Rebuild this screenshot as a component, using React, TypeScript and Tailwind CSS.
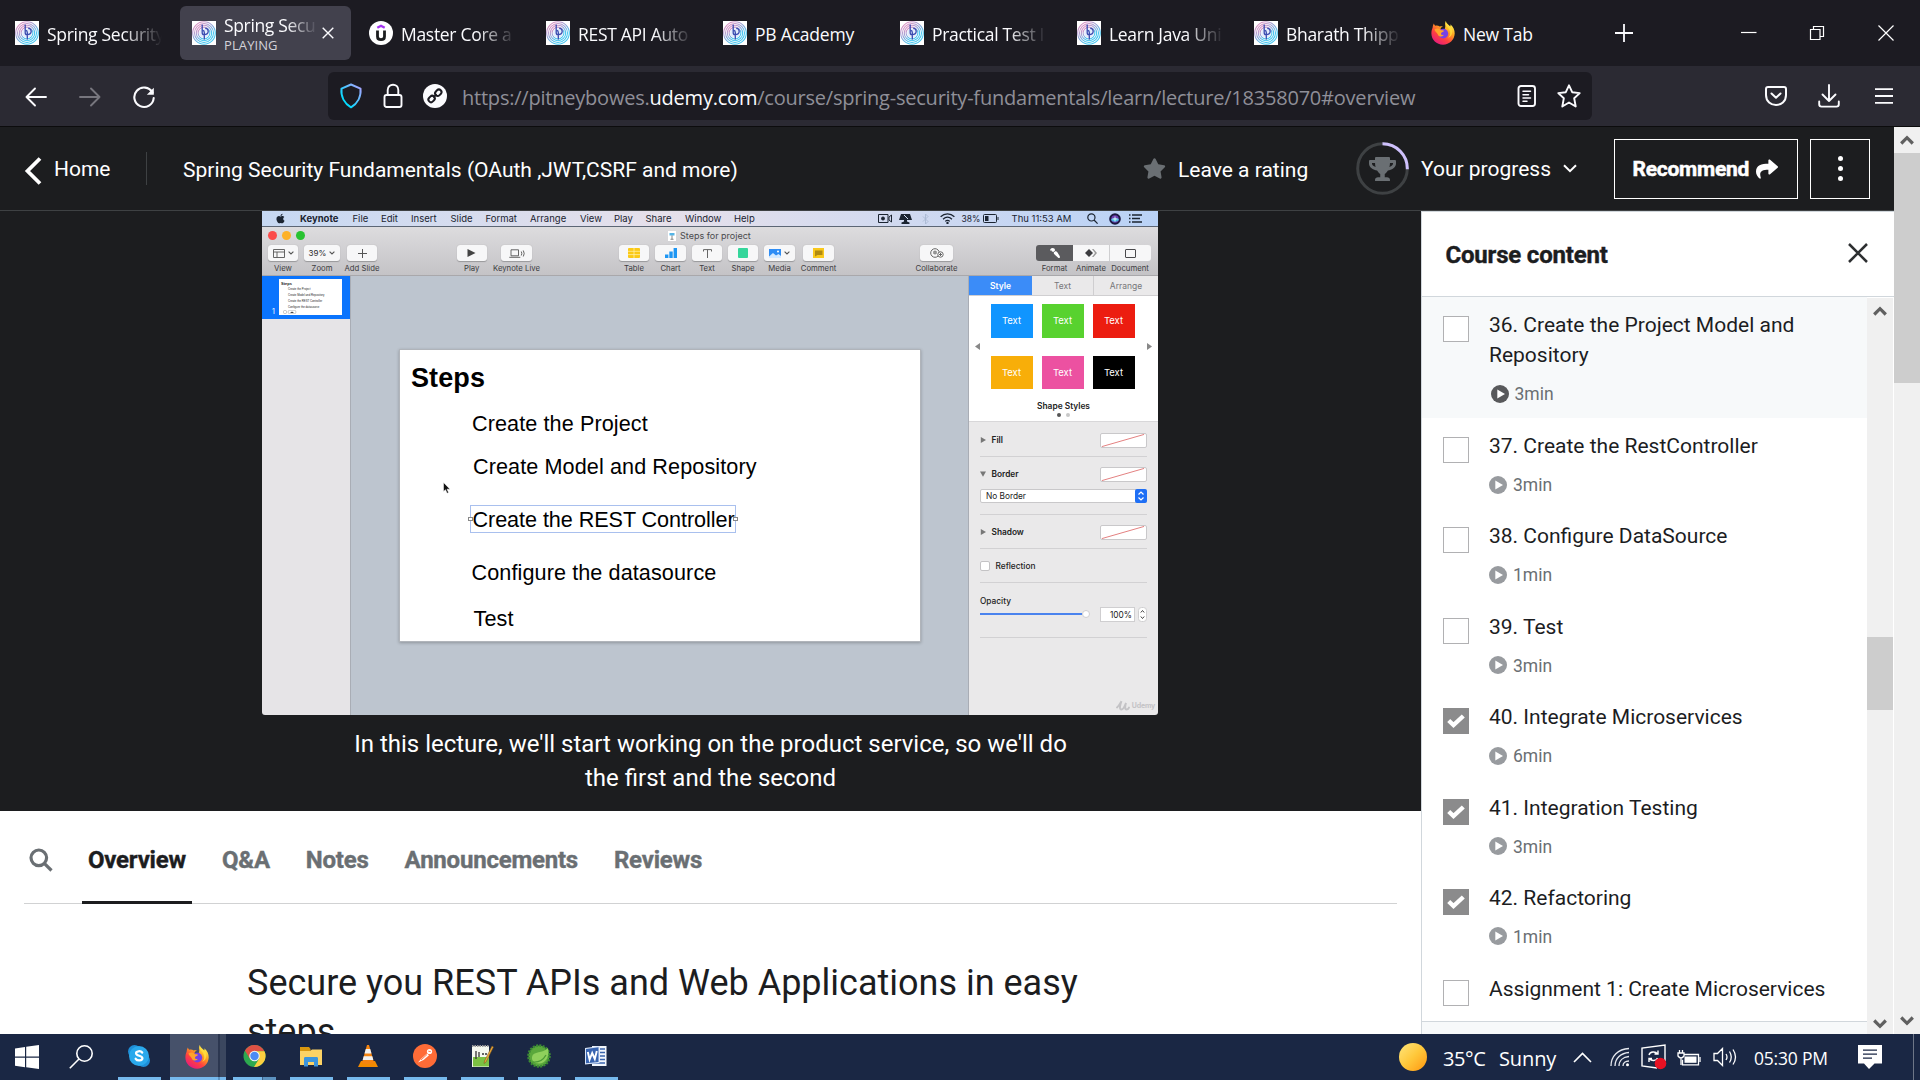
import React from 'react';
import { FaCheck, FaStar, FaTrophy, FaShare, FaApple, FaPaintBrush } from 'react-icons/fa';

/* ---------- shared drawings ---------- */

function FingerprintIcon() {
  return (
    <svg viewBox="0 0 24 24" className="h-6 w-6 shrink-0">
      <defs>
        <linearGradient id="fp" x1="0" y1="0" x2="0.7" y2="1">
          <stop offset="0.1" stopColor="#e58fc0" />
          <stop offset="0.5" stopColor="#8fa3d8" />
          <stop offset="0.8" stopColor="#45c5ef" />
        </linearGradient>
      </defs>
      <rect width="24" height="24" fill="#fff" />
      {[11.3, 9.5, 7.7, 5.9].map((r) => (
        <circle key={r} cx="12" cy="12" r={r} fill="none" stroke="url(#fp)" strokeWidth="1.05" />
      ))}
      <circle cx="12" cy="12" r="4.8" fill="#e4ecfb" />
      <path d="M10.200 3.500v8.200c0 1.200.8 1.900 1.800 1.900 2.600 0 4.200-1.400 4.200-3.300 0-1.700-1.400-2.900-3-2.900M12.300 18.500v-7c0-1.400-.6-2-1.400-2" fill="none" stroke="#3a4bb0" strokeWidth="1.300" />
    </svg>
  );
}

function UdemyIcon() {
  return (
    <svg viewBox="0 0 24 24" className="h-6 w-6 shrink-0">
      <circle cx="12" cy="12" r="12" fill="#fff" />
      <path d="M8.300 6.800 12 4.700l3.700 2.100" fill="none" stroke="#a435f0" strokeWidth="2.300" />
      <path d="M8.500 9.600v5.800c0 4.300 7 4.300 7 0V9.600" fill="none" stroke="#1c1d1f" strokeWidth="2.800" />
    </svg>
  );
}

function FirefoxIcon() {
  return (
    <svg viewBox="0 0 24 24" className="h-6 w-6 shrink-0">
      <defs>
        <linearGradient id="ffx" x1="0.85" y1="0.05" x2="0.2" y2="1">
          <stop offset="0.05" stopColor="#fff44f" />
          <stop offset="0.35" stopColor="#ffa21f" />
          <stop offset="0.65" stopColor="#ff4040" />
          <stop offset="1" stopColor="#e31587" />
        </linearGradient>
      </defs>
      <path d="M14.8 0c.5 2.700 3 3.800 4.300 5.400.6-.3.5-1.500.2-2.100 3 2.300 4.500 5.900 4.400 9.300C23.500 19 18.400 23.800 12 23.800S.4 19 .4 12.600c0-2.400.5-4.400 1.200-5.800.1-1.500.5-3.300 1.300-4.300.2 1 .7 1.800 1.300 2.300 1.400-.4 3.300-.2 4.500.6 1.500-.3 2.600-.1 3.200.2-1.600.7-2.300 1.700-2.400 2.600C12 9.200 14 9 14 7c1-2.300-.7-4.300.8-7z" fill="url(#ffx)" />
      <circle cx="12.300" cy="12.600" r="4.900" fill="#7542e5" />
      <path d="M3.500 8.500c2-1.500 5-1 6 .6 1.300.4 3 .2 3.600.9-.7 1-2.300 1.200-3 2-.6 1.900 1.400 2.700 3 1.600-1.400 3-5.600 2.400-6.500-.7C5.300 11 4 10.500 3.500 8.500z" fill="#ffa42a" />
      <path d="M14.500 2c.2 3.600 4.600 5 4.700 10 0 2-.8 3.700-2.200 4.800 5-1.500 5.500-8 2.300-11.400C17.500 4 15.500 3.500 14.500 2z" fill="#ffe03d" opacity="0.8" />
    </svg>
  );
}

/* ---------- browser chrome ---------- */

const TABS = [
  { icon: 'fp', title: 'Spring Security' },
  { icon: 'fp', title: 'Spring Secu', active: true },
  { icon: 'ud', title: 'Master Core a' },
  { icon: 'fp', title: 'REST API Auto' },
  { icon: 'fp', title: 'PB Academy', full: true },
  { icon: 'fp', title: 'Practical Test I' },
  { icon: 'fp', title: 'Learn Java Uni' },
  { icon: 'fp', title: 'Bharath Thipp' },
  { icon: 'ff', title: 'New Tab', full: true },
];

const FADE = '[mask-image:linear-gradient(to_right,black_66%,transparent_100%)]';

function Tab({ tab }: { tab: (typeof TABS)[number] }) {
  const icon = tab.icon === 'fp' ? <FingerprintIcon /> : tab.icon === 'ud' ? <UdemyIcon /> : <FirefoxIcon />;
  if (tab.active) {
    return (
      <div className="mr-1.5 flex h-[54px] w-[171px] shrink-0 items-center rounded-md bg-[#42414d] pl-3">
        {icon}
        <div className="ml-2 w-[94px]">
          <div className={`whitespace-nowrap text-[17.5px] leading-6 tracking-[-0.35px] ${FADE}`}>{tab.title}</div>
          <div className="text-[13px] leading-4 text-[#d3d2d8] tracking-[0.1px]">PLAYING</div>
        </div>
        <svg viewBox="0 0 12 12" className="ml-1 h-3 w-3" stroke="#fbfbfe" strokeWidth="1.4">
          <path d="M.7.7l10.600 10.600M11.300.7.7 11.300" />
        </svg>
      </div>
    );
  }
  return (
    <div className="flex h-[54px] w-[177px] shrink-0 items-center pl-3">
      {icon}
      <div className={`ml-2 w-[115px] whitespace-nowrap pt-px text-[17.5px] leading-6 ${tab.full ? 'tracking-[-0.2px]' : `tracking-[-0.3px] ${FADE}`}`}>{tab.title}</div>
    </div>
  );
}

function TabBar() {
  return (
    <div className="flex h-[66px] shrink-0 items-center bg-[#1c1b22] pl-[3px] text-[#fbfbfe]">
      {TABS.map((t, i) => <Tab key={i} tab={t} />)}
      <svg viewBox="0 0 18 18" className="ml-[19px] h-[18px] w-[18px] shrink-0" stroke="#fbfbfe" strokeWidth="1.800">
        <path d="M9 0v18M0 9h18" />
      </svg>
      <svg viewBox="0 0 16 16" className="ml-[108px] h-4 w-4 shrink-0" stroke="#fff" strokeWidth="1.200"><path d="M0 7.500h15.500" /></svg>
      <svg viewBox="0 0 16 16" className="ml-[52px] h-4 w-4 shrink-0" stroke="#fff" strokeWidth="1.200" fill="none">
        <path d="M1.500 4.500h9.500v10H1.500zM4.500 4.300V1.500h10v10h-3.300" />
      </svg>
      <svg viewBox="0 0 16 16" className="ml-[53px] h-4 w-4 shrink-0" stroke="#fff" strokeWidth="1.200"><path d="M.5.5l15 15M15.500.5l-15 15" /></svg>
    </div>
  );
}

function NavBar() {
  return (
    <div className="flex h-[61px] shrink-0 items-center border-b border-[#0c0c0d] bg-[#2b2a33] text-[#fbfbfe]">
      <svg viewBox="0 0 22 22" className="ml-[25px] mt-0.5 h-[22px] w-[22px] shrink-0" stroke="#fbfbfe" strokeWidth="1.900" fill="none" strokeLinecap="round" strokeLinejoin="round">
        <path d="M21 11H1.500M10 2.500 1.500 11l8.500 8.500" />
      </svg>
      <svg viewBox="0 0 22 22" className="ml-8 mt-0.5 h-[22px] w-[22px] shrink-0" stroke="#77767e" strokeWidth="1.900" fill="none" strokeLinecap="round" strokeLinejoin="round">
        <path d="M1 11h19.500M12 2.500l8.500 8.500-8.500 8.500" />
      </svg>
      <svg viewBox="0 0 24 24" className="ml-[31px] mt-0.5 h-6 w-6 shrink-0" stroke="#fbfbfe" strokeWidth="2.100" fill="none" strokeLinecap="round">
        <path d="M20.500 7.500A9.700 9.700 0 1 0 21.700 13" />
        <path d="M21.800 2.800v7h-7z" fill="#fbfbfe" stroke="none" />
      </svg>

      <div className="ml-[172px] flex h-12 w-[1264px] shrink-0 items-center rounded-md bg-[#1c1b22]">
        <svg viewBox="0 0 24 26" className="ml-[11px] h-[26px] w-6 shrink-0" fill="none" strokeWidth="2">
          <defs>
            <linearGradient id="sh" x1="0" y1="1" x2="1" y2="0"><stop offset="0.2" stopColor="#00ddff" /><stop offset="1" stopColor="#b5a0ff" /></linearGradient>
          </defs>
          <path d="M12 1.500 21.500 5.600c.8 8-3 15-9.500 18.700C5.500 20.600 1.700 13.600 2.500 5.600z" stroke="url(#sh)" strokeLinejoin="round" />
        </svg>
        <svg viewBox="0 0 20 26" className="ml-5 h-[26px] w-5 shrink-0" fill="none" stroke="#fbfbfe" strokeWidth="1.900">
          <rect x="1.500" y="12" width="17" height="12" rx="2" />
          <path d="M4.700 12V7c0-7 10.600-7 10.600 0v5" />
        </svg>
        <svg viewBox="0 0 24 24" className="ml-5 h-6 w-6 shrink-0" fill="none">
          <circle cx="12" cy="12" r="12" fill="#fbfbfe" />
          <g stroke="#1c1b22" strokeWidth="2">
            <rect x="-3.400" y="-2.600" width="6.800" height="5.200" rx="2.600" transform="translate(8.600 15) rotate(-45)" />
            <rect x="-3.400" y="-2.600" width="6.800" height="5.200" rx="2.600" transform="translate(15.300 8.700) rotate(-45)" />
            <path d="M10.300 13.500l3.300-3.300" />
          </g>
        </svg>
        <div className="ml-[15px] w-[1040px] whitespace-nowrap pt-[3px] text-[20px] leading-7 tracking-[-0.22px] text-[#8f8f98]">
          https://pitneybowes.<span className="text-[#fbfbfe]">udemy.com</span>/course/spring-security-fundamentals/learn/lecture/18358070#overview
        </div>
        <svg viewBox="0 0 20 22" className="ml-[15px] h-[22px] w-5 shrink-0" fill="none" stroke="#fbfbfe" strokeWidth="1.900" strokeLinecap="round">
          <rect x="1.500" y="1" width="16.500" height="20" rx="2.500" />
          <path d="M6 6.300h7.500M6 9.700h5.500M6 13h7.500M6 16.300h4" strokeWidth="1.500" />
        </svg>
        <svg viewBox="0 0 24 24" className="ml-5 h-6 w-6 shrink-0" fill="none" stroke="#fbfbfe" strokeWidth="1.900" strokeLinejoin="round">
          <path d="M12 1.300l3.200 6.900 7.500.9-5.500 5.200 1.500 8.200-6.700-4-6.700 4 1.500-8.200L1.300 9.100l7.500-.9z" />
        </svg>
      </div>

      <svg viewBox="0 0 22 20" className="ml-[173px] h-5 w-[22px] shrink-0" fill="none" stroke="#fbfbfe" strokeWidth="2" strokeLinecap="round" strokeLinejoin="round">
        <path d="M3 1h16c1.300 0 2 .7 2 2v6c0 13.300-20 13.300-20 0V3c0-1.300.7-2 2-2z" />
        <path d="M6.500 7.500l4.500 4.300 4.500-4.300" />
      </svg>
      <svg viewBox="0 0 22 24" className="ml-[31px] h-6 w-[22px] shrink-0" fill="none" stroke="#fbfbfe" strokeWidth="1.900" strokeLinecap="round" strokeLinejoin="round">
        <path d="M11 1v16M4.500 10.500 11 17l6.500-6.500M1.200 17.500v2.800c0 1.500.8 2.300 2.300 2.300h15c1.500 0 2.300-.8 2.300-2.300v-2.800" />
      </svg>
      <svg viewBox="0 0 18 16" className="ml-[35px] h-4 w-[18px] shrink-0" stroke="#fbfbfe" strokeWidth="1.800"><path d="M0 1.200h18M0 8h18M0 14.800h18" /></svg>
    </div>
  );
}

/* ---------- course header ---------- */

function CourseHeader() {
  return (
    <div className="flex h-[84px] shrink-0 items-center whitespace-nowrap border-b border-[#3e4143] bg-[#1c1d1f] text-[21px] leading-7 text-white">
      <svg viewBox="0 0 18 28" className="ml-6 mt-1 h-7 w-[18px] shrink-0" fill="none" stroke="#fff" strokeWidth="3.800"><path d="M16 1.500 3.500 14 16 26.500" /></svg>
      <div className="ml-3 w-[58px] shrink-0">Home</div>
      <div className="ml-[34px] h-[33px] w-px shrink-0 bg-[#3e4143]" />
      <div className="ml-[36px] w-[960px] shrink-0 pt-0.5">Spring Security Fundamentals (OAuth ,JWT,CSRF and more)</div>
      <FaStar className="h-[23px] w-[23px] shrink-0 text-[#6a6f73]" />
      <div className="ml-3 w-[178px] shrink-0 pt-0.5">Leave a rating</div>
      <div className="relative flex h-[53px] w-[53px] shrink-0 items-center justify-center">
        <svg viewBox="0 0 53 53" className="absolute inset-0 h-full w-full" fill="none" strokeWidth="3">
          <circle cx="26.500" cy="26.500" r="24.800" stroke="#3e4143" />
          <path d="M26.500 1.700a24.800 24.800 0 0 1 24.800 25.500" stroke="#cec0fc" />
        </svg>
        <FaTrophy className="h-[26px] w-[27px] text-[#6a6f73]" />
      </div>
      <div className="ml-3 w-[130px] shrink-0">Your progress</div>
      <svg viewBox="0 0 14 9" className="ml-3 h-[9px] w-3.5 shrink-0" fill="none" stroke="#fff" strokeWidth="2"><path d="M1 1.200l6 6 6-6" /></svg>
      <div className="ml-[37px] flex h-[60px] w-[184px] shrink-0 items-center border border-white pl-[17.5px]">
        <span className="font-bold tracking-[-0.25px] [-webkit-text-stroke:0.5px]">Recommend</span>
        <FaShare className="ml-[7px] h-[22px] w-[22px]" />
      </div>
      <div className="ml-3 flex h-[60px] w-[60px] shrink-0 flex-col items-center justify-center gap-[5px] border border-white">
        <i className="h-[5px] w-[5px] rounded-full bg-white" />
        <i className="h-[5px] w-[5px] rounded-full bg-white" />
        <i className="h-[5px] w-[5px] rounded-full bg-white" />
      </div>
    </div>
  );
}

/* ---------- lecture video ---------- */

const MENUS = [
  ['File', 'w-[28.5px]'],
  ['Edit', 'w-[30px]'],
  ['Insert', 'w-[39.5px]'],
  ['Slide', 'w-[35px]'],
  ['Format', 'w-[44.5px]'],
  ['Arrange', 'w-[50px]'],
  ['View', 'w-[34px]'],
  ['Play', 'w-[31.5px]'],
  ['Share', 'w-[39.5px]'],
  ['Window', 'w-[49px]'],
  ['Help', 'w-[143.5px]'],
];

function MacMenuBar() {
  return (
    <div className="flex h-4 shrink-0 items-center border-b border-[#5c6675] bg-linear-to-r from-[#c6d8f2] via-[#e6e0ea] via-45% to-[#b9d2f6] text-[9.5px] leading-4 text-[#1b2431]">
      <FaApple className="ml-[13px] h-[11px] w-[11px] shrink-0" />
      <div className="ml-3.5 w-[52.5px] shrink-0 font-bold">Keynote</div>
      {MENUS.map(([m, w]) => <div key={m} className={`shrink-0 ${w}`}>{m}</div>)}
      <svg viewBox="0 0 14 9" className="h-[9px] w-3.5 shrink-0" fill="none" stroke="#1b2431" strokeWidth="1"><path d="M.5.5h9.500v8H.5zM13.500 1v7L11 6V3z" /><circle cx="5" cy="4.500" r="1.500" fill="#1b2431" /></svg>
      <svg viewBox="0 0 13 10" className="ml-[7px] h-2.5 w-[13px] shrink-0" fill="#1b2431"><path d="M2 0h9l2 6H8v1.500l2.500 1V10h-8V8.500l2.500-1V6H0z" /><path d="M5 1l4 4" stroke="#d4dff3" /></svg>
      <svg viewBox="0 0 7 10" className="ml-2.5 h-2.5 w-[7px] shrink-0" fill="none" stroke="#a9b9d3" strokeWidth="0.900"><path d="M1 2.500l5 5L3.500 10V0L6 2.500l-5 5" /></svg>
      <svg viewBox="0 0 15 11" className="ml-[11px] h-[11px] w-[15px] shrink-0" fill="none" stroke="#1b2431" strokeWidth="1.200"><path d="M.6 3.800c4-3.800 9.800-3.800 13.800 0M3 6.200c2.700-2.500 6.300-2.500 9 0M5.200 8.400c1.500-1.300 3.100-1.300 4.600 0" /><circle cx="7.500" cy="10" r=".6" fill="#1b2431" /></svg>
      <div className="ml-[7px] w-[21px] shrink-0 text-[8.5px]">38%</div>
      <svg viewBox="0 0 16 9" className="h-[9px] w-4 shrink-0" fill="none" stroke="#1b2431"><rect x=".5" y=".5" width="13" height="8" rx="1" /><path d="M2 2h3.500v5H2z" fill="#1b2431" stroke="none" /><path d="M15 3v3" /></svg>
      <div className="ml-[13px] w-[75px] shrink-0">Thu 11:53 AM</div>
      <svg viewBox="0 0 11 11" className="h-[11px] w-[11px] shrink-0" fill="none" stroke="#1b2431" strokeWidth="1.200"><circle cx="4.400" cy="4.400" r="3.600" /><path d="M7 7l3.600 3.600" /></svg>
      <svg viewBox="0 0 12 12" className="ml-[11.5px] h-3 w-3 shrink-0"><circle cx="6" cy="6" r="5.800" fill="#1b1840" /><circle cx="6" cy="6" r="3.800" fill="#6a3fb0" /><path d="M2 6.500c2-2 6-2 8 0-1 3-7 3-8 0z" fill="#49b7e0" /><path d="M6 3.500v5M3.500 6h5" stroke="#fff" strokeWidth=".8" /></svg>
      <svg viewBox="0 0 13 9" className="ml-2 h-[9px] w-[13px] shrink-0" stroke="#1b2431" strokeWidth="1.300"><path d="M0 1h1.500M3 1h10M0 4.500h1.500M3 4.500h8M0 8h1.500M3 8h10" /></svg>
    </div>
  );
}

function Chev() {
  return <svg viewBox="0 0 6 4" className="h-1 w-1.5" fill="none" stroke="#555" strokeWidth="1.100"><path d="M.6.6 3 3 5.400.6" /></svg>;
}

function ToolButton({ label, className, children }: { label: string; className: string; children: React.ReactNode }) {
  return (
    <div className={`flex shrink-0 flex-col items-center ${className}`}>
      <div className="flex h-4 w-full items-center justify-center gap-[3px] rounded-[3px] bg-[#f7f7f8] shadow-[0_0.5px_1px_#00000040]">{children}</div>
      <div className="mt-[2px] whitespace-nowrap text-[7.75px] leading-[10px] text-[#3c3c3f]">{label}</div>
    </div>
  );
}

function KeynoteToolbar() {
  return (
    <div className="flex h-[49px] shrink-0 flex-col border-b border-[#a9a8ab] bg-linear-to-b from-[#dddcde] to-[#c4c3c6]">
      <div className="flex h-[17px] items-center pl-[5.5px]">
        <div className="flex w-[400px] gap-[5px]">
          <i className="h-[9px] w-[9px] rounded-full bg-[#fb4c4a]" />
          <i className="h-[9px] w-[9px] rounded-full bg-[#fdb127]" />
          <i className="h-[9px] w-[9px] rounded-full bg-[#28c231]" />
        </div>
        <svg viewBox="0 0 8 10" className="h-2.5 w-2"><rect width="8" height="10" fill="#fff" /><path d="M1.500 2h5v2.500h-5z" fill="#55b4e6" /><path d="M4 4.500V8M2.500 8.300h3" stroke="#555" strokeWidth=".7" /></svg>
        <div className="ml-[4.5px] whitespace-nowrap text-[9px] leading-4 text-[#4a4a4d]">Steps for project</div>
      </div>
      <div className="mt-px flex">
        <ToolButton label="View" className="ml-1.5 w-[30px]">
          <svg viewBox="0 0 12 9" className="h-[9px] w-3" fill="none" stroke="#555" strokeWidth=".9"><path d="M.5.5h11v8H.5zM.5 3h11M4 3v5.500" /></svg><Chev />
        </ToolButton>
        <ToolButton label="Zoom" className="ml-1.5 w-9"><span className="text-[8px] leading-4 text-[#2b2b2d]">39%</span><Chev /></ToolButton>
        <ToolButton label="Add Slide" className="ml-[7px] w-[30px]"><svg viewBox="0 0 9 9" className="h-[9px] w-[9px]" stroke="#555"><path d="M4.500 0v9M0 4.500h9" /></svg></ToolButton>
        <ToolButton label="Play" className="ml-[79.5px] w-[30.5px]"><svg viewBox="0 0 9 8" className="h-2 w-[9px]" fill="#444"><path d="M.5 0 8.500 4l-8 4z" /></svg></ToolButton>
        <ToolButton label="Keynote Live" className="ml-3.5 w-[31px]">
          <svg viewBox="0 0 16 9" className="h-[9px] w-4" fill="none" stroke="#555" strokeWidth=".9"><path d="M2 .8h7.500v6H2zM.3 8.300h11M12.300 2.500q1 2 0 4M14.300 1.500q1.800 3 0 6" /></svg>
        </ToolButton>
        <ToolButton label="Table" className="ml-[87px] w-[30px]">
          <svg viewBox="0 0 12 10" className="h-2.5 w-3"><rect width="12" height="10" rx="1" fill="#fbc916" /><path d="M0 3.300h12M0 6.600h12M6 0v10" stroke="#fff3b8" strokeWidth=".7" /></svg>
        </ToolButton>
        <ToolButton label="Chart" className="ml-1.5 w-[31px]">
          <svg viewBox="0 0 12 10" className="h-2.5 w-3" fill="#1e96f3"><path d="M0 6.500h3.400V10H0zM4.300 3.500h3.400V10H4.300zM8.600 0H12v10H8.600z" /></svg>
        </ToolButton>
        <ToolButton label="Text" className="ml-1.5 w-[30px]"><svg viewBox="0 0 9 9" className="h-[9px] w-[9px]" fill="none" stroke="#666"><path d="M.5 2.500V.6h8v1.900M4.500.6V9" /></svg></ToolButton>
        <ToolButton label="Shape" className="ml-1.5 w-[30px]"><i className="h-2.5 w-2.5 rounded-[1px] bg-[#35d69b]" /></ToolButton>
        <ToolButton label="Media" className="ml-1.5 w-[31px]">
          <svg viewBox="0 0 12 9" className="h-[9px] w-3"><rect width="12" height="9" fill="#2f8df5" /><path d="M0 7.500 4 4l3 2.500L9.500 5 12 7v2H0z" fill="#d5eaff" /><circle cx="9" cy="2.600" r="1" fill="#fff" /></svg><Chev />
        </ToolButton>
        <ToolButton label="Comment" className="ml-2 w-[31px]">
          <svg viewBox="0 0 11 10" className="h-2.5 w-[11px]"><rect width="11" height="10" fill="#f9c81c" /><path d="M2 2.500h7.500V7H4.500L2 8.500z" fill="#b08a10" /></svg>
        </ToolButton>
        <ToolButton label="Collaborate" className="ml-[86px] w-[33px]">
          <svg viewBox="0 0 14 10" className="h-2.5 w-3.5" fill="none" stroke="#666"><circle cx="5" cy="5" r="4.300" /><path d="M3.500 3.500q1.500-1.500 3 0v2q-1.500 1.500-3 0z" fill="#999" strokeWidth=".4" /><circle cx="10.500" cy="6.500" r="2.700" fill="#fff" /><path d="M10.500 5v3M9 6.500h3" /></svg>
        </ToolButton>
        <div className="ml-[83px] flex">
          <div className="flex w-[37px] flex-col items-center">
            <div className="flex h-4 w-full items-center justify-center rounded-l-[3px] bg-[#5b5b5e]"><FaPaintBrush className="h-2.5 w-2.5 -scale-x-100 rotate-180 text-white" /></div>
            <div className="mt-[2px] text-[7.75px] leading-[10px] text-[#3c3c3f]">Format</div>
          </div>
          <div className="flex w-9 flex-col items-center">
            <div className="flex h-4 w-full items-center justify-center bg-[#f7f7f8]"><svg viewBox="0 0 12 8" className="h-2 w-3" fill="#3c3c3f"><path d="M0 4l4-4 4 4-4 4z" /><path d="M7 0l1.500 0L12 4 8.500 8H7l3-4z" fill="#999" /></svg></div>
            <div className="mt-[2px] text-[7.75px] leading-[10px] text-[#3c3c3f]">Animate</div>
          </div>
          <div className="flex w-[42px] flex-col items-center">
            <div className="flex h-4 w-full items-center justify-center rounded-r-[3px] border-l border-[#cfcfd1] bg-[#f7f7f8]"><i className="h-[9px] w-[11px] rounded-[1px] border-[1.5px] border-[#4a4a4d]" /></div>
            <div className="mt-[2px] text-[7.75px] leading-[10px] text-[#3c3c3f]">Document</div>
          </div>
        </div>
      </div>
    </div>
  );
}

function SlideList() {
  return (
    <div className="w-[89px] shrink-0 border-r border-[#a9adb5] bg-[#e6e4e7]">
      <div className="flex h-[43px] bg-[#0a74fd] pt-[3px]">
        <div className="w-[17px] pl-2.5 pt-[28px] text-[7px] leading-[9px] text-white">1</div>
        <div className="h-9 w-[63px] bg-white pl-[2px] pt-[2px] font-['Liberation_Sans'] text-[2.8px] leading-[6px] text-[#222]">
          <div className="text-[4px] font-bold leading-[5px]">Steps</div>
          <div className="pl-[7px]">Create the Project</div>
          <div className="pl-[7px]">Create Model and Repository</div>
          <div className="pl-[7px]">Create the REST Controller</div>
          <div className="pl-[7px]">Configure the datasource</div>
          <svg viewBox="0 0 14 4" className="ml-[2px] h-1 w-3.5" fill="none" stroke="#999" strokeWidth=".5"><circle cx="2" cy="2" r="1.700" /><rect x="5" y=".3" width="8" height="3.400" rx="1.700" /><path d="M7 3l2-1.500L11 3z" fill="#444" stroke="none" /></svg>
        </div>
      </div>
    </div>
  );
}

function Slide() {
  return (
    <div className="relative ml-12 mt-[73px] h-[293px] w-[522px] border border-[#b0b4ba] bg-white font-['Liberation_Sans'] text-[21.6px] leading-6 tracking-[0.1px] whitespace-nowrap text-black shadow-[0_1px_3px_#00000040]">
      <div className="absolute left-[11px] top-[13px] text-[27px] font-bold leading-[30px]">Steps</div>
      <div className="absolute left-[72px] top-[62px]">Create the Project</div>
      <div className="absolute left-[73px] top-[105px]">Create Model and Repository</div>
      <div className="absolute left-[70px] top-[155px] h-[28px] w-[266px] border border-[#a9c0ee] pl-[1.5px] pt-[2px] tracking-[-0.06px]">
        Create the REST Controller
        <i className="absolute -left-[3px] top-[11px] h-1 w-[5px] border border-[#888] bg-white" />
        <i className="absolute -right-[3px] top-[11px] h-1 w-[5px] border border-[#888] bg-white" />
      </div>
      <div className="absolute left-[71.5px] top-[211px]">Configure the datasource</div>
      <div className="absolute left-[73.5px] top-[257px]">Test</div>
      <svg viewBox="0 0 8 12" className="absolute left-[43px] top-[132px] h-3 w-2" fill="#111" stroke="#fff" strokeWidth=".5"><path d="M.5.5v9l2-1.800 1.600 3.600 1.500-.7L4 7.200h3z" /></svg>
    </div>
  );
}

function NoneSwatch() {
  return (
    <svg viewBox="0 0 47 15" className="h-[15px] w-[47px] rounded-[2px] border border-[#c9c8ca] bg-white" preserveAspectRatio="none"><path d="M1 14.500 45 .5" stroke="#e07575" strokeWidth="1" /></svg>
  );
}

function StyleRow({ label, open }: { label: string; open?: boolean }) {
  return (
    <div className="flex h-[15px] items-center">
      <svg viewBox="0 0 6 6" className="h-1.5 w-1.5" fill="#777">{open ? <path d="M0 .5h6L3 5.800z" /> : <path d="M.8 0v6L6 3z" />}</svg>
      <span className="ml-[5.5px] flex-1 font-semibold">{label}</span>
      <NoneSwatch />
    </div>
  );
}

const SWATCH_ROWS = [
  ['bg-[#1095ff]', 'bg-[#58d22f]', 'bg-[#ec1d10]'],
  ['bg-[#f8ae09]', 'bg-[#ec51a1]', 'bg-black'],
];

function Inspector() {
  return (
    <div className="flex w-[190px] shrink-0 flex-col border-l border-[#a9adb5] bg-[#eae9ea] text-[8.3px] leading-[12px] text-[#222]">
      <div className="flex h-5 shrink-0 items-center border-b border-[#d0cfd1] text-center text-[8.5px] leading-[20px] text-[#77777a]">
        <div className="h-[19px] w-[63px] bg-[#3b8cf8] font-semibold text-white">Style</div>
        <div className="h-[19px] w-[62px] border-r border-[#cfced0]">Text</div>
        <div className="h-[19px] flex-1">Arrange</div>
      </div>
      <div className="h-[126px] shrink-0 border-b border-[#d8d7d9] bg-white pt-2">
        <div className="flex items-center">
          <svg viewBox="0 0 5 7" className="ml-1.5 h-[7px] w-[5px]" fill="#888"><path d="M5 0v7L0 3.500z" /></svg>
          <div className="ml-[10.5px] flex w-[144px] flex-col gap-[18px]">
            {SWATCH_ROWS.map((row, i) => (
              <div key={i} className="flex gap-[9px]">
                {row.map((c) => <div key={c} className={`flex h-[33.5px] w-[42px] items-center justify-center pt-px text-[9.5px] text-white ${c}`}>Text</div>)}
              </div>
            ))}
          </div>
          <svg viewBox="0 0 5 7" className="ml-[12px] h-[7px] w-[5px]" fill="#888"><path d="M0 0v7l5-3.500z" /></svg>
        </div>
        <div className="mt-[11px] text-center text-[8.4px] font-semibold">Shape Styles</div>
        <div className="mt-[0.5px] flex justify-center gap-[5px]"><i className="h-1 w-1 rounded-full bg-[#555]" /><i className="h-1 w-1 rounded-full bg-[#c8c8c8]" /></div>
      </div>
      <div className="pl-[11px] pr-[11px] pt-[10.5px]">
        <div className="h-[24px] border-b border-[#d2d1d3]"><StyleRow label="Fill" /></div>
        <div className="mt-2.5 h-[48px] border-b border-[#d2d1d3]">
          <StyleRow label="Border" open />
          <div className="mt-[7px] flex h-3.5 items-center rounded-[2px] border border-[#c9c8ca] bg-white pl-[5px]">
            <span className="flex-1">No Border</span>
            <svg viewBox="0 0 12 14" className="-mr-px h-3.5 w-3"><rect width="12" height="14" rx="2" fill="#1f6ff5" /><path d="M3.500 5.500 6 3l2.500 2.500M3.500 8.500 6 11l2.500-2.500" fill="none" stroke="#fff" strokeWidth="1.200" /></svg>
          </div>
        </div>
        <div className="mt-2.5 h-[24px] border-b border-[#d2d1d3]"><StyleRow label="Shadow" /></div>
        <div className="mt-[12.5px] flex h-[22px] border-b border-[#d2d1d3]">
          <i className="h-2.5 w-2.5 rounded-[2px] border border-[#c4c3c5] bg-white" />
          <span className="ml-[5.5px] font-medium leading-[11px]">Reflection</span>
        </div>
        <div className="mt-[12px] font-medium leading-[12px]">Opacity</div>
        <div className="flex h-[31px] border-b border-[#d2d1d3]">
          <div className="mt-[3px] flex h-2 w-[110px] items-center">
            <div className="h-[2.5px] w-[102px] bg-[#4a83ee]" />
            <i className="h-2 w-2 shrink-0 rounded-full border border-[#cfced0] bg-white" />
          </div>
          <div className="ml-2.5 h-[15px] w-[35px] border border-[#cfced0] bg-white pr-[2px] text-right leading-[14px]">100%</div>
          <svg viewBox="0 0 9 15" className="ml-[3px] h-[15px] w-[9px]"><rect x=".5" y=".5" width="8" height="14" rx="3" fill="#fff" stroke="#cfced0" /><path d="M2.800 5.500 4.500 3.500l1.700 2M2.800 9.500l1.700 2 1.700-2" fill="none" stroke="#444" /></svg>
        </div>
        <div className="mt-[61px] flex items-center justify-end gap-[2px] -mr-2 text-[7px] font-bold leading-[13px] tracking-[-0.2px] text-[#c4c3c6]">
          <svg viewBox="0 0 14 11" className="h-[11px] w-3.5" fill="none" stroke="#c4c3c6" strokeWidth="1.900" strokeLinecap="round"><path d="M1 7.500C3 6 4.500 3 5.500 1.200 4 5 3 9.500 5.500 9.500S9 5 10 3c-1 3-1.300 6.500.5 6.500S12.500 8.500 13 7.500" /></svg>
          Udemy
        </div>
      </div>
    </div>
  );
}

function VideoFrame() {
  return (
    <div className="mr-px flex h-[504px] w-[896px] flex-col overflow-hidden rounded-b-[3px] font-['Inter',sans-serif]">
      <MacMenuBar />
      <KeynoteToolbar />
      <div className="flex min-h-0 flex-1">
        <SlideList />
        <div className="flex-1 bg-[#bdc5cf]"><Slide /></div>
        <Inspector />
      </div>
    </div>
  );
}

/* ---------- below the video ---------- */

function LectureTabs() {
  return (
    <div className="mx-6 flex h-[93px] shrink-0 border-b border-[#d1d2d3] text-[24px] font-bold leading-[34px] tracking-[-0.22px] text-[#6a6f73] [-webkit-text-stroke:0.4px]">
      <svg viewBox="0 0 24 24" className="ml-[5px] mt-[37px] h-6 w-6" fill="none" stroke="#6a6f73" strokeWidth="3.200"><circle cx="9.800" cy="9.800" r="7.800" /><path d="M15.300 15.300 22.500 22.500" /></svg>
      <div className="-mb-px ml-[29px] w-[110px] border-b-[3px] border-[#1c1d1f] pl-1.5 pt-[32px] text-[#1c1d1f]">Overview</div>
      <div className="ml-[30px] pt-[32px]">Q&amp;A</div>
      <div className="ml-[36px] pt-[32px]">Notes</div>
      <div className="ml-[36px] pt-[32px]">Announcements</div>
      <div className="ml-[36px] pt-[32px]">Reviews</div>
    </div>
  );
}

/* ---------- course content sidebar ---------- */

const LECTURES = [
  { title: '37. Create the RestController', time: '3min', done: false },
  { title: '38. Configure DataSource', time: '1min', done: false },
  { title: '39. Test', time: '3min', done: false },
  { title: '40. Integrate Microservices', time: '6min', done: true },
  { title: '41. Integration Testing', time: '3min', done: true },
  { title: '42. Refactoring', time: '1min', done: true },
];

function Checkbox({ done }: { done: boolean }) {
  return done ? (
    <div className="mt-[6px] flex h-[26px] w-[26px] shrink-0 items-center justify-center bg-[#8b8b8c]">
      <svg viewBox="0 0 18 14" className="h-3.5 w-[18px]" fill="none" stroke="#fff" strokeWidth="4.400"><path d="M1.700 6.500 6.500 11 16.300 2" /></svg>
    </div>
  ) : (
    <div className="mt-[6px] h-[26px] w-[26px] shrink-0 border border-[#b1b1b3] bg-white" />
  );
}

function PlayBadge({ className }: { className: string }) {
  return (
    <svg viewBox="0 0 18 18" className={`h-[18px] w-[18px] shrink-0 ${className}`}><circle cx="9" cy="9" r="9" fill="currentColor" /><path d="M6.300 4.600v8.800L14 9z" fill="#fff" /></svg>
  );
}

function ArrowGlyph({ down }: { down?: boolean }) {
  return (
    <svg viewBox="0 0 14 10" className="h-2.5 w-3.5" fill="none" stroke="#606060" strokeWidth="3.200"><path d={down ? 'M1.200 1.500 7 7.300l5.800-5.800' : 'M1.200 8.500 7 2.700l5.800 5.800'} /></svg>
  );
}

function Sidebar() {
  return (
    <aside className="flex w-[473px] shrink-0 flex-col border-l border-t border-[#d1d7dc] bg-white text-[#1c1d1f]">
      <div className="flex h-[85px] shrink-0 items-center justify-between border-b border-[#d1d7dc] pl-[23.5px] pr-[26px]">
        <h2 className="pt-0.5 text-[24px] font-bold leading-8 tracking-[-0.2px] [-webkit-text-stroke:0.4px]">Course content</h2>
        <svg viewBox="0 0 20 20" className="mb-[2px] h-5 w-5" stroke="#2d2f31" strokeWidth="2.500"><path d="M1 1l18 18M19 1 1 19" /></svg>
      </div>
      <div className="flex min-h-0 flex-1">
        <div className="flex w-[445px] flex-col overflow-hidden text-[21px] leading-[30px]">
          <div className="flex h-[121px] shrink-0 bg-[#f7f9fa] pl-[21px] pt-[13px]">
            <Checkbox done={false} />
            <div className="ml-5">
              <div>36. Create the Project Model and<br />Repository</div>
              <div className="mt-[10px] flex items-center pl-[1.5px] text-[17.5px] leading-[25px] text-[#6a6f73]"><PlayBadge className="text-[#58595b]" /><span className="pl-1.5 pt-0.5">3min</span></div>
            </div>
          </div>
          {LECTURES.map((l) => (
            <div key={l.title} className="flex h-[90.4px] shrink-0 pl-[21px] pt-[13px]">
              <Checkbox done={l.done} />
              <div className="ml-5">
                <div>{l.title}</div>
                <div className="mt-[10px] flex items-center text-[17.5px] leading-[25px] text-[#6a6f73]"><PlayBadge className="text-[#989b9f]" /><span className="pl-1.5 pt-0.5">{l.time}</span></div>
              </div>
            </div>
          ))}
          <div className="flex h-[61px] shrink-0 pl-[21px] pt-[13.5px]">
            <Checkbox done={false} />
            <div className="ml-5">Assignment 1: Create Microservices</div>
          </div>
          <div className="h-4 shrink-0 border-t border-[#d1d7dc] bg-[#f7f9fa]" />
        </div>
        <div className="mt-px flex w-[26px] flex-col items-center bg-[#f0f0f0]">
          <div className="flex h-[26px] items-center"><ArrowGlyph /></div>
          <div className="mt-[313px] h-[73px] w-full bg-[#cdcdcd]" />
          <div className="mb-[5px] mt-auto"><ArrowGlyph down /></div>
        </div>
      </div>
    </aside>
  );
}

/* ---------- taskbar ---------- */

function ChromeIcon() {
  return (
    <svg viewBox="0 0 24 24" className="h-6 w-[23px]">
      <circle cx="12" cy="12" r="11.500" fill="#2da94f" />
      <path d="M2 6.300A11.500 11.500 0 0 1 22 6.300L22 7H12L7 14.500z" fill="#de5145" />
      <path d="M12 7h10.400A11.500 11.500 0 0 1 11.500 23.500L17 14.500z" fill="#fdcf40" />
      <circle cx="12" cy="12" r="5.500" fill="#f4f4f4" /><circle cx="12" cy="12" r="4.400" fill="#4b8bf4" />
    </svg>
  );
}

function SkypeIcon() {
  return (
    <svg viewBox="0 0 24 24" className="h-6 w-6">
      <circle cx="7.500" cy="7.500" r="6.500" fill="#1e8fd8" /><circle cx="16.500" cy="16.500" r="6.500" fill="#1e8fd8" /><circle cx="12" cy="12" r="10" fill="#2aa9ec" />
      <path d="M15.200 8.500c-1.500-2-6.300-1.600-6.100 1 .2 2.800 6.300 1.700 6.300 4.700 0 2.700-5.200 3-6.700.6" fill="none" stroke="#fff" strokeWidth="2.300" strokeLinecap="round" />
    </svg>
  );
}

function ExplorerIcon() {
  return (
    <svg viewBox="0 0 24 24" className="h-6 w-6">
      <path d="M1 3h9l1.500 2v5H1z" fill="#d9980f" /><path d="M1 7h10l2-1.500h10V21H1z" fill="#fdd365" />
      <path d="M5 14.500c0-.8.500-1.500 1.300-1.500h11.400c.8 0 1.300.7 1.300 1.500V22.500h-4V18H9v4.500H5z" fill="#3d95dd" />
    </svg>
  );
}

function VlcIcon() {
  return (
    <svg viewBox="0 0 24 24" className="h-6 w-6">
      <path d="M5 17h14l3 6H2z" fill="#f28a00" /><path d="M11 1h2l5 17.500c-2 2-10 2-12 0z" fill="#f58410" />
      <path d="M9.800 5h4.400l1.300 4.500h-7zM7.700 12.300h8.600l1 3.700H6.700z" fill="#f2f2f2" />
    </svg>
  );
}

function PostmanIcon() {
  return (
    <svg viewBox="0 0 24 24" className="h-6 w-6">
      <circle cx="12" cy="12" r="12" fill="#ff6c37" />
      <path d="M5 18.500l3-3.500 6-5.500 2 1.800-5.500 4.700z" fill="#fff" /><circle cx="16.500" cy="7.500" r="2.600" fill="#fff" />
      <path d="M8 16l6-5.500M15.300 7.200l2.500.5" stroke="#ff6c37" strokeWidth=".9" />
    </svg>
  );
}

function NotepadIcon() {
  return (
    <svg viewBox="0 0 24 24" className="h-6 w-6">
      <path d="M2 2h17v21H2z" fill="#f4f7ee" /><path d="M3 13h16v9.500H3z" fill="#7bc143" /><path d="M2 2h17" stroke="#9a9a9a" strokeWidth="2" strokeDasharray="1.500 1" />
      <path d="M6 7v8M9 8v5M12 10h2M15 10h2" stroke="#333" strokeWidth="1.300" /><path d="M22 2 14.500 17l-.5 2.500 2-1.500L23.500 3z" fill="#f0a93a" stroke="#75501a" strokeWidth=".5" />
    </svg>
  );
}

function SpringIcon() {
  return (
    <svg viewBox="0 0 24 24" className="h-6 w-6">
      <circle cx="12" cy="12" r="10.500" fill="#5aa83c" stroke="#3c8a34" strokeWidth="2.600" strokeDasharray="2 1.300" />
      <path d="M21 4c1.500 8.500-2 15.500-9 15.500-5 0-7.500-3-7-6.500C6 7 16 9.500 21 4z" fill="#8fd05c" /><path d="M5.500 18c5 .5 10.500-1.500 13.500-7" fill="none" stroke="#4c9a37" strokeWidth="1.300" />
    </svg>
  );
}

function WordIcon() {
  return (
    <svg viewBox="0 0 24 24" className="h-6 w-6">
      <path d="M8 2h14.500v20H8z" fill="#f2f6fc" /><path d="M16 5h5M16 8.500h5M16 12h5M16 15.500h5M5 19h16" stroke="#3a64ad" strokeWidth="1.300" />
      <path d="M1 4 15.500 2v17L1 20.500z" fill="#d9e5f7" /><path d="M2 5l12.500-1.700V18L2 19.300z" fill="#3864b0" />
      <path d="M3.800 8l1.800 7.500L8.200 9l2.600 6L12.800 7" fill="none" stroke="#fff" strokeWidth="1.900" />
    </svg>
  );
}

const APPS = [ChromeIcon, ExplorerIcon, VlcIcon, PostmanIcon, NotepadIcon, SpringIcon, WordIcon];

function TaskApp({ icon, split }: { icon: React.ReactNode; split?: boolean }) {
  return (
    <div className="flex h-full w-[57px] shrink-0 flex-col items-center">
      <div className="flex flex-1 items-center pr-px pt-px">{icon}</div>
      <div className="flex h-[3px] w-[43px] bg-[#76b9ed]">{split && <i className="ml-[29px] h-full w-3.5 border-l border-[#3f6189] bg-[#5c92c0]" />}</div>
    </div>
  );
}

function Taskbar() {
  return (
    <div className="flex h-[46px] shrink-0 items-center bg-[#1a2744] text-white">
      <svg viewBox="0 0 24 24" className="ml-[15px] h-6 w-6 shrink-0" fill="#fff"><path d="M0 3.500l10-1.500v9.500H0zM11.200 1.800 24 0v11.500H11.200zM0 12.700h10v9.500L0 20.700zM11.200 12.700H24V24l-12.800-1.800z" /></svg>
      <svg viewBox="0 0 24 24" className="ml-[30px] h-6 w-6 shrink-0" fill="none" stroke="#fff" strokeWidth="1.600"><circle cx="15.500" cy="8.500" r="7.700" /><path d="M10 14 .8 23.300" /></svg>
      <div className="ml-[18px]" />
      <TaskApp icon={<SkypeIcon />} />
      <div className="ml-[2px] flex h-full w-14 shrink-0">
        <div className="flex h-full w-12 flex-col items-center border-b-[3px] border-[#76b9ed] bg-[#46516a] pl-1.5 pt-[11px]"><FirefoxIcon /></div>
        <div className="h-full w-[2px] border-b-[3px] border-[#5c92c0] bg-[#2c3750]" />
        <div className="h-full w-1.5 border-b-[3px] border-[#76b9ed] bg-[#3b475f]" />
      </div>
      {APPS.map((Icon, i) => <TaskApp key={i} icon={<Icon />} split={i === 0} />)}

      <div className="ml-auto flex h-full items-center">
        <i className="h-7 w-7 rounded-full bg-linear-to-br from-[#ffe678] via-[#ffc83a] to-[#ff9500]" />
        <div className="ml-4 w-14 pt-1 text-[20px] leading-7 tracking-[-0.4px]">35°C</div>
        <div className="w-[74px] pt-1 text-[20px] leading-7 tracking-[-0.1px]">Sunny</div>
        <svg viewBox="0 0 19 11" className="h-[11px] w-[19px]" fill="none" stroke="#fff" strokeWidth="1.600"><path d="M1 10l8.500-8.500L18 10" /></svg>
        <svg viewBox="0 0 20 20" className="ml-[18px] h-5 w-5" fill="none" stroke="#e6e9ef" strokeWidth="1.300"><path d="M1 19C1 9 8 2 19 1.500M5 19C5 11 11 6 19 5.500M9 19c0-5.500 4-9 10-9.500M13 19c0-3 2.500-5 6-5" /><circle cx="17.500" cy="17.800" r="1.500" fill="#fff" stroke="none" /></svg>
        <svg viewBox="0 0 26 26" className="ml-[11px] h-[26px] w-[26px]" fill="none" stroke="#fff" strokeWidth="1.400">
          <path d="M16 24 1 22V4l23-3v16" /><path d="M8 11c1-3.500 6.500-4 8.500-1M17 6.500V10h-3.500M16.500 14c-1 3-6 3.500-8 .5M8 18v-3.500h3" /><circle cx="19.500" cy="19.500" r="5.800" fill="#e81123" stroke="none" />
        </svg>
        <svg viewBox="0 0 24 17" className="ml-[10px] h-[17px] w-6" fill="none" stroke="#fff" strokeWidth="1.300"><path d="M5.500 5.500H21.500v10.300H5.500v-5" /><path d="M7.500 7.500h12v6.300h-12z" fill="#fff" stroke="none" /><path d="M23 8v5M1 4h6v3q-3 4-6 0zM2.500 4V1M5.500 4V1M4 9v7" fill="#1a2744" /></svg>
        <svg viewBox="0 0 24 20" className="ml-3 h-5 w-6" fill="none" stroke="#fff" strokeWidth="1.300"><path d="M1 6.500h3.500L9.500 1.500v17l-5-5H1zM13 7q2 3 0 6M16.500 4.500q3.500 5.500 0 11M20 2.500q5 7.500 0 15" /></svg>
        <div className="ml-[17px] w-[104px] pt-px text-[17.5px] leading-6 tracking-[-0.2px]">05:30 PM</div>
        <svg viewBox="0 0 24 24" className="h-6 w-6"><path d="M0 0h24v18.500h-7.500L11 24l-5-5.500H0z" fill="#fff" /><path d="M5 5.200h14M5 9.200h14M5 13.200h9" stroke="#1a2744" strokeWidth="1.200" /></svg>
        <div className="ml-[31px] mr-1.5 h-full w-px bg-[#6d7687]" />
      </div>
    </div>
  );
}

/* ---------- page ---------- */

export default function App() {
  return (
    <div className="flex h-[1080px] w-[1920px] flex-col overflow-hidden bg-white font-['Open_Sans',sans-serif]">
      <TabBar />
      <NavBar />
      <div className="flex min-h-0 flex-1 font-['Roboto',sans-serif]">
        <div className="flex w-[1894px] flex-col">
          <CourseHeader />
          <div className="flex min-h-0 flex-1">
            <main className="flex w-[1421px] shrink-0 flex-col overflow-hidden">
              <div className="flex h-[600px] shrink-0 flex-col items-center bg-[#1c1d1f]">
                <VideoFrame />
                <p className="mt-[12px] w-[760px] text-center text-[24px] leading-[34px] text-white">
                  In this lecture, we'll start working on the product service, so we'll do<br />the first and the second
                </p>
              </div>
              <LectureTabs />
              <h1 className="ml-[247px] mt-[55px] w-[860px] shrink-0 text-[36px] leading-[49px] text-[#1c1d1f]">
                Secure you REST APIs and Web Applications in easy steps
              </h1>
            </main>
            <Sidebar />
          </div>
        </div>
        <div className="flex w-[26px] flex-col items-center bg-[#f0f0f0]">
          <div className="flex h-[26px] items-center"><ArrowGlyph /></div>
          <div className="h-[230px] w-full bg-[#cdcdcd]" />
          <div className="mb-2 mt-auto"><ArrowGlyph down /></div>
        </div>
      </div>
      <Taskbar />
    </div>
  );
}
